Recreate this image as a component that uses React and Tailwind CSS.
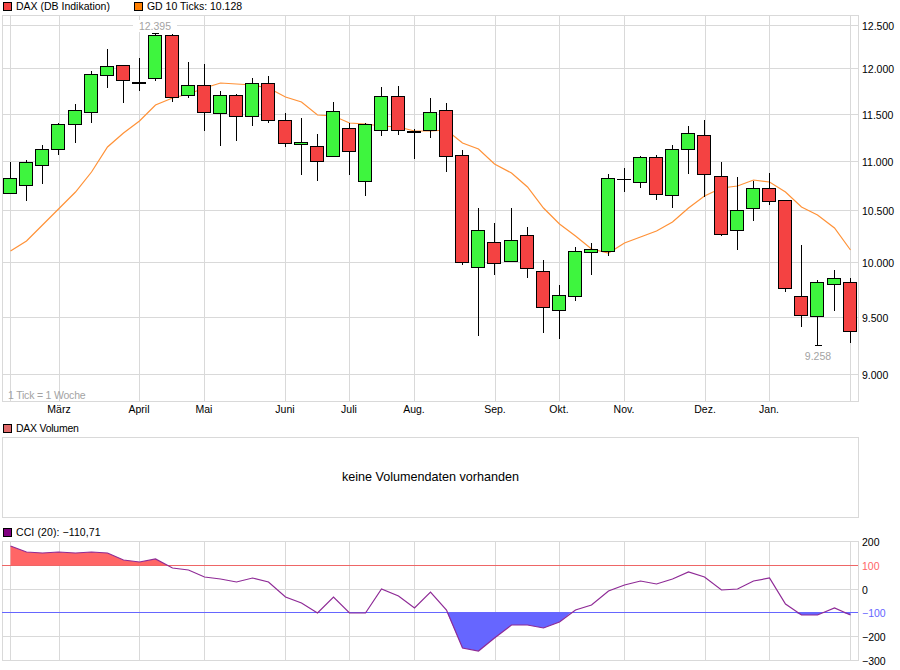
import React from 'react'

const RED = '#f44242'
const GREEN = '#3ef53e'
const GRID = '#d9d9d9'

// [wick top, body top, body bottom, wick bottom, r|g|d|t]
const candles = [
  [162, 178, 193, 193, 'g'], [160, 162, 185, 201, 'g'], [145, 149, 165, 184, 'g'], [123, 124, 149, 155, 'g'],
  [104, 110, 124, 143, 'g'], [71, 74, 112, 123, 'g'], [49, 66, 75, 88, 'g'], [65, 65, 80, 103, 'r'],
  [58, 82, 82, 91, 'd'], [33, 35, 78, 81, 'g'], [34, 35, 97, 102, 'r'], [62, 85, 95, 98, 'g'],
  [64, 85, 112, 131, 'r'], [91, 95, 113, 146, 'g'], [94, 95, 116, 141, 'r'], [78, 83, 116, 126, 'g'],
  [76, 83, 120, 123, 'r'], [113, 120, 143, 147, 'r'], [118, 142, 144, 175, 'g'], [134, 146, 161, 181, 'r'],
  [102, 111, 156, 156, 'g'], [123, 128, 151, 175, 'r'], [123, 124, 181, 196, 'g'], [87, 96, 130, 136, 'g'],
  [86, 96, 130, 135, 'r'], [129, 131, 131, 159, 'd'], [98, 112, 130, 138, 'g'], [103, 110, 156, 172, 'r'],
  [150, 155, 262, 265, 'r'], [208, 230, 267, 336, 'g'], [223, 242, 263, 275, 'r'], [208, 240, 261, 261, 'g'],
  [227, 235, 268, 278, 'r'], [260, 271, 307, 333, 'r'], [285, 295, 310, 339, 'g'], [247, 251, 296, 301, 'g'],
  [243, 249, 252, 275, 'g'], [174, 178, 251, 256, 'g'], [168, 179, 179, 192, 't'], [156, 157, 182, 188, 'g'],
  [155, 157, 194, 200, 'r'], [145, 149, 195, 208, 'g'], [126, 133, 149, 174, 'g'], [120, 135, 174, 197, 'r'],
  [162, 176, 234, 236, 'r'], [177, 210, 230, 250, 'g'], [181, 188, 208, 221, 'g'], [173, 188, 201, 205, 'r'],
  [200, 200, 288, 292, 'r'], [245, 296, 315, 327, 'r'], [280, 282, 316, 345, 'g'], [270, 278, 284, 311, 'g'],
  [278, 282, 331, 343, 'r'],
]

const avg = [
  251, 241, 225, 209, 192, 172, 147, 133, 121, 105, 98, 94, 88, 83, 84, 85, 88, 97, 102, 115, 116, 123, 124, 126,
  127, 131, 131, 130, 143, 149, 164, 173, 187, 208, 224, 236, 249, 253, 243, 237, 231, 222, 208, 196, 188, 186,
  180, 182, 192, 207, 215, 228, 250,
]

const cci = [
  546, 552, 553, 552, 553, 552, 553, 560, 562, 559, 568, 570, 577, 579, 582, 578, 582, 597, 603, 613, 597, 613,
  613, 589, 596, 608, 592, 610, 648, 651, 638, 625, 625, 628, 622, 610, 605, 591, 585, 581, 584, 579, 572, 577,
  590, 589, 581, 578, 604, 615, 615, 608, 615,
]

const cx = (i) => Math.round(10 + 16.15 * i)

const vLines = [10, 59, 139, 204, 285, 349, 414, 495, 559, 624, 705, 769, 850]
const months = [
  ['März', 59], ['April', 139], ['Mai', 204], ['Juni', 285], ['Juli', 349], ['Aug.', 414],
  ['Sep.', 495], ['Okt.', 559], ['Nov.', 624], ['Dez.', 705], ['Jan.', 769],
]
const priceAxis = [
  ['12.500', 25], ['12.000', 68], ['11.500', 114], ['11.000', 161], ['10.500', 210],
  ['10.000', 262], ['9.500', 317], ['9.000', 374],
]

function Legend({ color, className = '', children }) {
  return (
    <div className={`flex items-center gap-[4px] ${className}`}>
      <span className="w-[9px] h-[9px] border border-black" style={{ backgroundColor: color }} />
      <span>{children}</span>
    </div>
  )
}

function Candle({ c, i }) {
  const x = cx(i)
  const [top, bodyTop, bodyBottom, bottom, kind] = c
  if (kind === 'd' || kind === 't') {
    return (
      <g shapeRendering="crispEdges">
        <line x1={x + 0.5} x2={x + 0.5} y1={top} y2={bottom} stroke="#000" />
        <rect x={x - 7} y={bodyTop} width={14} height={kind === 'd' ? 2 : 1} fill="#000" />
      </g>
    )
  }
  return (
    <g shapeRendering="crispEdges">
      <line x1={x + 0.5} x2={x + 0.5} y1={top} y2={bottom} stroke="#000" />
      <rect
        x={x - 6.5}
        y={bodyTop + 0.5}
        width={13}
        height={bodyBottom - bodyTop}
        fill={kind === 'r' ? RED : GREEN}
        stroke="#000"
      />
    </g>
  )
}

function PriceChart() {
  return (
    <svg width="900" height="404" viewBox="0 13 900 404" className="block">
      <g stroke={GRID} shapeRendering="crispEdges">
        {priceAxis.map(([label, y]) => (
          <line key={label} x1="2" x2="858" y1={y + 0.5} y2={y + 0.5} />
        ))}
        {vLines.map((x) => (
          <line key={x} x1={x + 0.5} x2={x + 0.5} y1="15" y2="401" />
        ))}
        <rect x="2.5" y="15.5" width="856" height="386" fill="none" />
      </g>
      <polyline
        points={avg.map((y, i) => `${cx(i) + 0.5},${y}`).join(' ')}
        fill="none"
        stroke="#ff9238"
        strokeWidth="1.2"
      />
      {candles.map((c, i) => (
        <Candle key={i} c={c} i={i} />
      ))}
      <rect x="815" y="345" width="7" height="1" fill="#000" />
      <rect x="152" y="33" width="7" height="1" fill="#000" />
      <rect x="133" y="20" width="44" height="12" fill="#fff" />
      <g fontSize="10.5" fill="#a3a3a3">
        <text x="155" y="30" textAnchor="middle">12.395</text>
        <text x="818" y="360" textAnchor="middle">9.258</text>
        <text x="8" y="399" letterSpacing="-0.2">1 Tick = 1 Woche</text>
      </g>
      <g fontSize="10.5" fill="#000">
        {priceAxis.map(([label, y]) => (
          <text key={label} x="862" y={y + 5}>{label}</text>
        ))}
        {months.map(([label, x]) => (
          <text key={label} x={x} y="413" textAnchor="middle">{label}</text>
        ))}
      </g>
    </svg>
  )
}

function CciChart() {
  const pts = cci.map((y, i) => [cx(i) + 0.5, y])
  const line = pts.map((p) => p.join(',')).join(' ')
  const above = [...pts.slice(0, 10), [168, 565.5], [10.5, 565.5]]
  const below = [[447, 612.5], ...pts.slice(28, 35), [571, 612.5]]
  const below2 = [[795, 612.5], pts[49], pts[50], [823, 612.5]]
  const below3 = [[842, 612.5], pts[52], [850.5, 612.5]]
  const toPoints = (list) => list.map((p) => p.join(',')).join(' ')
  const axis = [
    ['200', 542, '#000'], ['100', 565.5, '#ff6666'], ['0', 590, '#000'],
    ['−100', 613, '#6666ff'], ['−200', 637, '#000'], ['−300', 661, '#000'],
  ]
  return (
    <svg width="900" height="134" viewBox="0 536 900 134" className="block">
      <g stroke={GRID} shapeRendering="crispEdges">
        <line x1="2" x2="858" y1="589.5" y2="589.5" />
        <line x1="2" x2="858" y1="636.5" y2="636.5" />
        {vLines.map((x) => (
          <line key={x} x1={x + 0.5} x2={x + 0.5} y1="541" y2="660" />
        ))}
        <rect x="2.5" y="541.5" width="856" height="119" fill="none" />
      </g>
      <polygon points={toPoints(above)} fill="#ff6666" />
      <polygon points={toPoints(below)} fill="#6666ff" />
      <polygon points={toPoints(below2)} fill="#6666ff" />
      <polygon points={toPoints(below3)} fill="#6666ff" />
      <g shapeRendering="crispEdges">
        <line x1="2" x2="858" y1="565.5" y2="565.5" stroke="#ee6666" />
        <line x1="2" x2="858" y1="612.5" y2="612.5" stroke="#6666ff" />
      </g>
      <polyline points={line} fill="none" stroke="#8e2a96" strokeWidth="1.2" />
      <g fontSize="10.5">
        {axis.map(([label, y, color]) => (
          <text key={label} x="862" y={y + 4} fill={color}>{label}</text>
        ))}
      </g>
    </svg>
  )
}

export default function App() {
  return (
    <div className="w-[900px] h-[670px] bg-white text-black text-[10.5px] leading-none overflow-hidden font-['Liberation_Sans',Arial,sans-serif]">
      <div className="flex h-[13px] pl-[3px] items-start pt-[1px] gap-[24px]">
        <Legend color={RED}>DAX (DB Indikation)</Legend>
        <Legend color="#ff7f00">GD 10 Ticks: 10.128</Legend>
      </div>
      <PriceChart />
      <div className="flex h-[20px] pl-[3px] items-start pt-[6px] tracking-[-0.25px]">
        <Legend color="#e06a6a">DAX Volumen</Legend>
      </div>
      <div className="ml-[2px] w-[857px] h-[81px] border border-[#d9d9d9] flex items-center justify-center text-[12.6px]">
        keine Volumendaten vorhanden
      </div>
      <div className="flex h-[18px] pl-[3px] items-start pt-[9px] tracking-[0.1px]">
        <Legend color="#800080">CCI (20): −110,71</Legend>
      </div>
      <CciChart />
    </div>
  )
}
